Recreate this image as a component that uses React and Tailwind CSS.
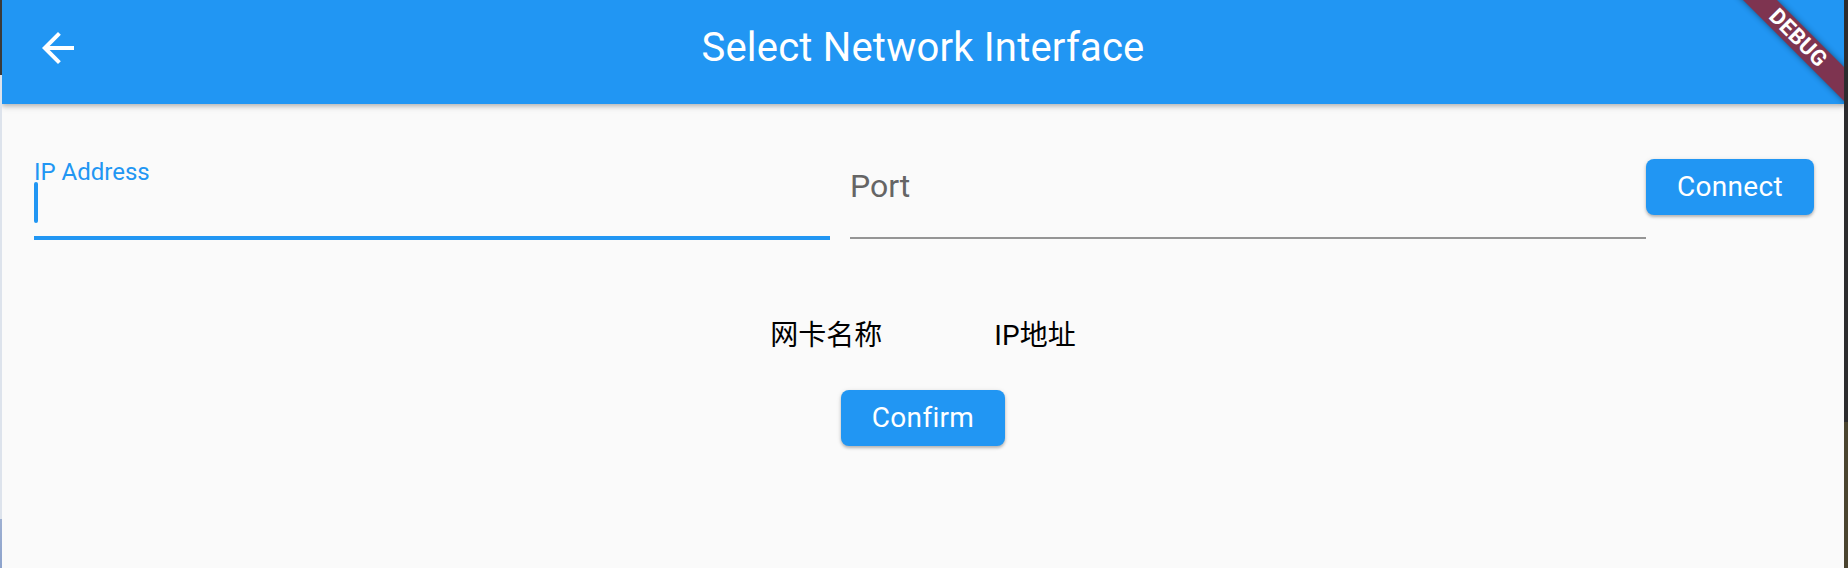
import React from "react";

const ArrowBack = () => (
  <svg width="48" height="48" viewBox="0 0 24 24" fill="white">
    <path d="M20 11H7.83l5.59-5.59L12 4l-8 8 8 8 1.41-1.41L7.83 13H20v-2z" />
  </svg>
);

const App = () => {
  return (
    <div className="flex h-[568px] w-full overflow-hidden" style={{ fontFamily: "Roboto, 'Noto Sans CJK SC', sans-serif" }}>
      {/* desktop edge */}
      <div className="flex w-[2px] flex-col">
        <div className="h-[75px] bg-[#3a3a3a]" />
        <div className="h-[444px] bg-[#dde3ec]" />
        <div className="flex-1 bg-gradient-to-b from-[#9eb0d2] to-[#8da3cc]" />
      </div>

      {/* app window */}
      <div className="relative flex flex-1 flex-col overflow-hidden bg-[#fafafa]">
        {/* App bar */}
        <header className="relative z-10 grid h-[104px] grid-cols-[1fr_auto_1fr] items-center bg-[#2196f3] pb-2 shadow-[0_2px_4px_rgba(0,0,0,0.18),0_4px_6px_rgba(0,0,0,0.1)]">
          <div className="pl-[32px]">
            <button className="flex h-[48px] w-[48px] items-center justify-center">
              <ArrowBack />
            </button>
          </div>
          <h1 className="text-[40px] leading-[48px] font-normal tracking-[0.2px] text-white">
            Select Network Interface
          </h1>
          <div />
        </header>

        {/* Body */}
        <main className="flex flex-1 flex-col pt-[55px]">
          <div className="flex items-start pr-[30px] pl-[32px]">
            {/* IP Address (focused) */}
            <div className="mr-[20px] flex flex-1 flex-col pt-[2px]">
              <label className="text-[24px] leading-[22px] text-[#2196f3]">IP Address</label>
              <div className="mt-[-1px] h-[41px] w-[4px] rounded-full bg-[#2196f3]" />
              <div className="mt-[13px] h-[4px] w-full bg-[#2196f3]" />
            </div>

            {/* Port */}
            <div className="flex flex-1 flex-col pt-[8px]">
              <span className="text-[32px] leading-[38px] text-[#656565]">Port</span>
              <div className="mt-[32px] h-[2px] w-full bg-[#959595]" />
            </div>

            <button className="h-[56px] w-[168px] shrink-0 rounded-[8px] bg-[#2196f3] text-[28px] font-normal tracking-[0.3px] text-white shadow-[0_2px_3px_rgba(0,0,0,0.22),0_1px_5px_rgba(0,0,0,0.12)]">
              Connect
            </button>
          </div>

          <div className="mt-[80px] flex justify-center gap-[112px] text-[28px] leading-[32px] text-black">
            <span>网卡名称</span>
            <span>IP地址</span>
          </div>

          <div className="mt-[38px] flex justify-center">
            <button className="h-[56px] w-[164px] rounded-[8px] bg-[#2196f3] text-[28px] font-normal tracking-[0.3px] text-white shadow-[0_2px_3px_rgba(0,0,0,0.22),0_1px_5px_rgba(0,0,0,0.12)]">
              Confirm
            </button>
          </div>
        </main>

        {/* Debug banner */}
        <div className="absolute top-[26px] right-[-54px] z-20 flex h-[24px] w-[200px] rotate-45 items-center justify-center bg-[#7e3450] shadow-[0_0_6px_rgba(0,0,0,0.45)]">
          <span className="text-[22px] leading-[20px] font-bold tracking-[0.3px] text-white">DEBUG</span>
        </div>
      </div>

      {/* right edge */}
      <div className="flex w-[4px] flex-col">
        <div className="h-[422px] bg-[#2c2c2e]" />
        <div className="flex-1 bg-[#4a442f]" />
      </div>
    </div>
  );
};

export default App;
